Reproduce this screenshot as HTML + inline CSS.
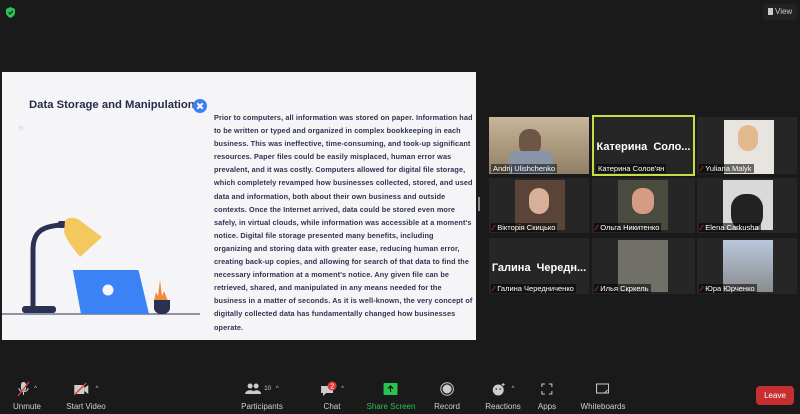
<!DOCTYPE html>
<html><head><meta charset="utf-8"><style>
*{margin:0;padding:0;box-sizing:border-box}
body{width:800px;height:414px;background:#1a1a1a;overflow:hidden;position:relative;font-family:"Liberation Sans","Noto Sans CJK SC",sans-serif}
.slide{position:absolute;left:2px;top:72px;width:474px;height:268px;background:#f5f5f8}
.title{position:absolute;left:27px;top:27px;font-size:11.3px;font-weight:bold;color:#262a4d}
.body{position:absolute;left:212px;top:39px;font-size:7.3px;line-height:13.1px;color:#2f3350;font-weight:bold;white-space:nowrap;letter-spacing:0.1px}
.tile{position:absolute;background:#262626;overflow:hidden}
.nm{position:absolute;left:2px;bottom:1px;font-size:7.5px;color:#fff;background:rgba(0,0,0,.55);padding:0 2px;white-space:nowrap}
.big{position:absolute;left:0;right:0;top:24px;text-align:center;color:#fff;font-weight:bold;font-size:11px;white-space:nowrap}
.mic{color:#e03a3a;font-weight:bold;margin-right:3px}
.tb{position:absolute;top:380px;text-align:center;font-size:8px;color:#cfcfcf;transform:translateX(-50%)}
.tb .ic{height:18px;display:flex;align-items:center;justify-content:center;margin-bottom:4px}
</style></head><body>
<svg style="position:absolute;left:5px;top:6px" width="11" height="13"><path d="M5.5 1 L10 3 V7 C10 10 5.5 12 5.5 12 C5.5 12 1 10 1 7 V3Z" fill="#2bc24f"/><path d="M3.5 6.5 L5 8 L7.8 4.8" stroke="#123" stroke-width="1.2" fill="none"/></svg>
<div style="position:absolute;left:763px;top:4px;width:34px;height:16px;background:#222;border-radius:3px;color:#ccc;font-size:8px;line-height:16px;padding-left:5px"><span style="display:inline-block;width:5px;height:7px;background:#ccc;margin-right:2px;vertical-align:-1px"></span>View</div>

<div class="slide">
<div class="title">Data Storage and Manipulation</div>
<svg style="position:absolute;left:191px;top:27px" width="14" height="14"><circle cx="7" cy="7" r="7" fill="#3d7ef0"/><path d="M4.3 4.3 L9.7 9.7 M9.7 4.3 L4.3 9.7" stroke="#fff" stroke-width="2"/></svg>
<div style="position:absolute;left:17px;top:53px;font-size:5px;color:#777">▷</div>
<svg style="position:absolute;left:0;top:140px" width="200" height="110">
<path d="M0 102 H198" stroke="#2a3152" stroke-width="1"/>
<path d="M31 96 V38 C31 20 40 14 60 13" stroke="#2a3152" stroke-width="5" fill="none"/>
<rect x="20" y="94" width="34" height="7" rx="3" fill="#2a3152"/>
<rect x="56" y="9" width="8" height="7" rx="2" fill="#2a3152"/>
<path d="M63 9 C66 4 75 5 80 10 L100 25 L78 45 C72 37 64 28 62 20Z" fill="#f3c85f"/>
<path d="M71 59 Q70 58 72 58 H135 Q137 58 137 60 L147 102 H79Z" fill="#3b82f6"/>
<circle cx="106" cy="78" r="5.5" fill="#f5f5f8"/>
<path d="M152 89 L154 80 L156 84 L158 68 L160 84 L162 79 L166 89Z" fill="#f28a3a"/>
<path d="M152 88 H168 V96 C168 100 164 102 160 102 C156 102 152 100 152 96Z" fill="#2a3152"/>
</svg>
<div class="body">Prior to computers, all information was stored on paper. Information had<br>to be written or typed and organized in complex bookkeeping in each<br>business. This was ineffective, time-consuming, and took-up significant<br>resources. Paper files could be easily misplaced, human error was<br>prevalent, and it was costly. Computers allowed for digital file storage,<br>which completely revamped how businesses collected, stored, and used<br>data and information, both about their own business and outside<br>contexts. Once the Internet arrived, data could be stored even more<br>safely, in virtual clouds, while information was accessible at a moment's<br>notice. Digital file storage presented many benefits, including<br>organizing and storing data with greater ease, reducing human error,<br>creating back-up copies, and allowing for search of that data to find the<br>necessary information at a moment's notice. Any given file can be<br>retrieved, shared, and manipulated in any means needed for the<br>business in a matter of seconds. As it is well-known, the very concept of<br>digitally collected data has fundamentally changed how businesses<br>operate.</div>
</div>
<div style="position:absolute;left:478px;top:197px;width:2px;height:14px;background:#888"></div>

<div class="tile" style="left:489px;top:117px;width:100px;height:57px;background:linear-gradient(#c9b79a,#8f7d66)"><div style="position:absolute;left:30px;top:12px;width:22px;height:26px;border-radius:10px;background:#6e5646"></div><div style="position:absolute;left:20px;top:34px;width:44px;height:23px;background:#8894a8;border-radius:8px 8px 0 0"></div><div class="nm" style="background:rgba(0,0,0,.5)">Andrij Ulishchenko</div></div>
<div class="tile" style="left:592px;top:115px;width:103px;height:61px;border:2px solid #c8dc45"><div class="big">Катерина&nbsp; Соло...</div><div class="nm">Катерина Солов'ян</div></div>
<div class="tile" style="left:697px;top:117px;width:100px;height:57px"><div style="position:absolute;left:27px;top:3px;width:50px;height:54px;background:#e8e4e0"></div><div style="position:absolute;left:41px;top:8px;width:20px;height:26px;border-radius:10px;background:#e2b98d"></div><div class="nm"><span class="mic">⁄</span>Yuliana Malyk</div></div>

<div class="tile" style="left:489px;top:178px;width:100px;height:55px"><div style="position:absolute;left:26px;top:2px;width:50px;height:50px;background:#5a4438"></div><div style="position:absolute;left:40px;top:10px;width:20px;height:26px;border-radius:10px;background:#d8b09a"></div><div class="nm"><span class="mic">⁄</span>Вікторія Скицько</div></div>
<div class="tile" style="left:592px;top:178px;width:103px;height:55px"><div style="position:absolute;left:26px;top:2px;width:50px;height:50px;background:#4b4a3e"></div><div style="position:absolute;left:40px;top:10px;width:22px;height:26px;border-radius:10px;background:#d49c82"></div><div class="nm"><span class="mic">⁄</span>Ольга Никитенко</div></div>
<div class="tile" style="left:697px;top:178px;width:100px;height:55px"><div style="position:absolute;left:26px;top:2px;width:50px;height:50px;background:#d9d9d9"></div><div style="position:absolute;left:34px;top:16px;width:32px;height:36px;border-radius:14px;background:#222"></div><div class="nm"><span class="mic">⁄</span>Elena Carkusha</div></div>

<div class="tile" style="left:489px;top:238px;width:100px;height:56px"><div class="big">Галина&nbsp; Чередн...</div><div class="nm"><span class="mic">⁄</span>Галина Чередниченко</div></div>
<div class="tile" style="left:592px;top:238px;width:103px;height:56px"><div style="position:absolute;left:26px;top:2px;width:50px;height:52px;background:#707068"></div><div class="nm"><span class="mic">⁄</span>Илья Скркель</div></div>
<div class="tile" style="left:697px;top:238px;width:100px;height:56px"><div style="position:absolute;left:26px;top:2px;width:50px;height:52px;background:linear-gradient(#b9c8dc,#8a8c90)"></div><div class="nm"><span class="mic">⁄</span>Юра Юрченко</div></div>

<div class="tb" style="left:27px"><div class="ic"><svg width="14" height="16"><rect x="4" y="1" width="5" height="9" rx="2.5" fill="#ccc"/><path d="M2 7 C2 12 11 12 11 7 M6.5 11 V14" stroke="#ccc" fill="none"/><path d="M1 15 L12 1" stroke="#e03a3a" stroke-width="1.3"/></svg><span style="font-size:6px;margin-left:3px">^</span></div>Unmute</div>
<div class="tb" style="left:86px"><div class="ic"><svg width="16" height="14"><rect x="1" y="3" width="10" height="9" fill="#ccc"/><path d="M11 6 L15 3 V12 L11 9Z" fill="#ccc"/><path d="M1 13 L13 1" stroke="#e03a3a" stroke-width="1.3"/></svg><span style="font-size:6px;margin-left:6px">^</span></div>Start Video</div>
<div class="tb" style="left:262px"><div class="ic"><svg width="16" height="12"><circle cx="5" cy="3" r="2.5" fill="#ccc"/><circle cx="11" cy="3" r="2.5" fill="#ccc"/><path d="M0 11 C0 6 10 6 10 11Z M7 11 C7 6 16 6 16 11Z" fill="#ccc"/></svg><span style="font-size:6px;margin-left:3px">10&nbsp;&nbsp;&nbsp;^</span></div>Participants</div>
<div class="tb" style="left:332px"><div class="ic"><svg width="18" height="16"><path d="M1 5 H13 V12 H6 L3 15 V12 H1Z" fill="#ccc"/><circle cx="12" cy="5" r="4.5" fill="#e03a3a"/><text x="10.3" y="7.5" font-size="7" fill="#fff" font-family="Liberation Sans">2</text></svg><span style="font-size:6px;margin-left:3px">^</span></div>Chat</div>
<div class="tb" style="left:391px;color:#2bc24f"><div class="ic"><svg width="14" height="12"><rect width="14" height="12" rx="1" fill="#2bc24f"/><path d="M7 9 V3 M4.5 5.5 L7 3 L9.5 5.5" stroke="#000" fill="none"/></svg></div>Share Screen</div>
<div class="tb" style="left:447px"><div class="ic"><svg width="14" height="14"><circle cx="7" cy="7" r="6.3" fill="none" stroke="#ccc"/><circle cx="7" cy="7" r="4.5" fill="#ccc"/></svg></div>Record</div>
<div class="tb" style="left:503px"><div class="ic"><svg width="16" height="14"><circle cx="7" cy="8" r="5.5" fill="#ccc"/><circle cx="5" cy="7" r=".8" fill="#222"/><circle cx="9" cy="7" r=".8" fill="#222"/><path d="M12 1 V4 M10.5 2.5 H13.5" stroke="#ccc"/></svg><span style="font-size:6px;margin-left:4px">^</span></div>Reactions</div>
<div class="tb" style="left:547px"><div class="ic"><svg width="12" height="12" fill="none" stroke="#ccc"><path d="M1 4 V1 H4 M8 1 H11 V4 M11 8 V11 H8 M4 11 H1 V8"/></svg></div>Apps</div>
<div class="tb" style="left:603px"><div class="ic"><svg width="14" height="12" fill="none" stroke="#ccc"><rect x="1" y="1" width="12" height="9"/><path d="M9 10 L12 7"/></svg></div>Whiteboards</div>
<div style="position:absolute;left:756px;top:386px;width:38px;height:19px;background:#c62f2f;border-radius:4px;color:#fff;font-size:8px;text-align:center;line-height:19px">Leave</div>
</body></html>
